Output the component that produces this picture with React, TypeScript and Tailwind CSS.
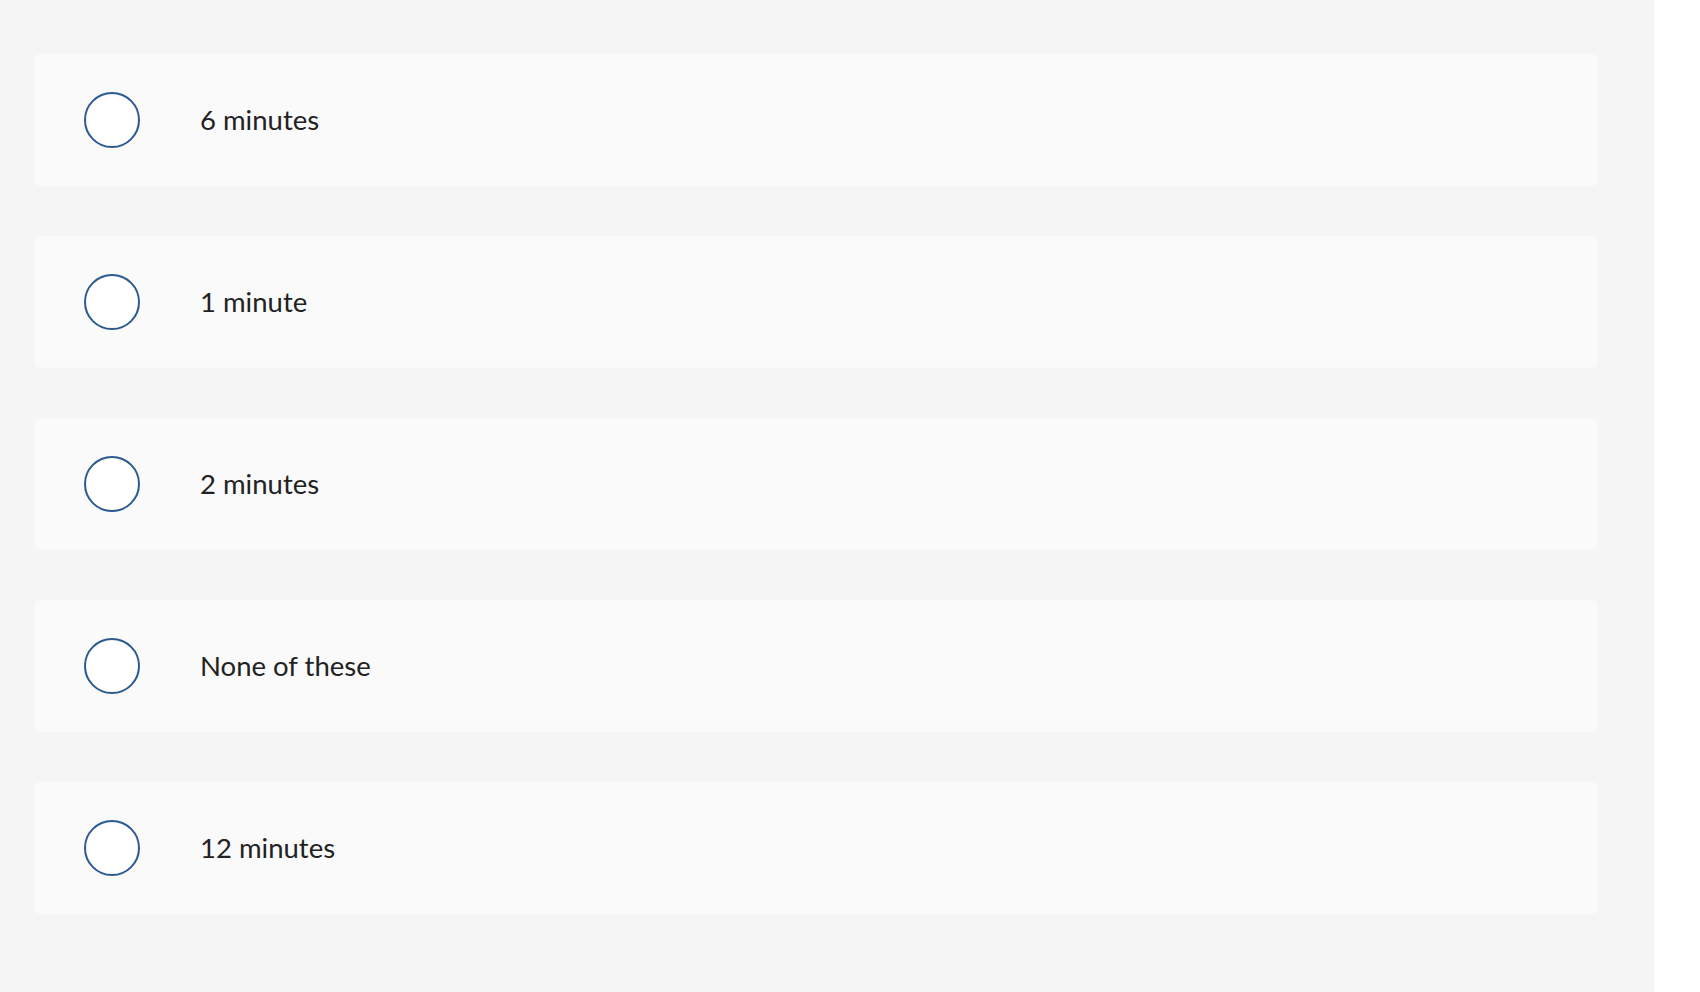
const options = ['6 minutes', '1 minute', '2 minutes', 'None of these', '12 minutes'];

export default function App() {
  return (
    <div className="min-h-[992px] w-full bg-white">
      <div className="min-h-[992px] w-[1654px] bg-[#f5f5f5] pl-[34px] pr-[56px] pt-[54px]">
        <div className="flex flex-col gap-[50px]">
          {options.map((label) => (
            <label
              key={label}
              className="flex h-[132px] cursor-pointer items-center rounded-[6px] bg-[#fafafa] pl-[50px]"
            >
              <span className="h-[56px] w-[56px] shrink-0 rounded-full border-2 border-[#2b5a8f] bg-white" />
              <span className="ml-[60px] font-['Lato',sans-serif] text-[27.5px] text-[#222222]">{label}</span>
            </label>
          ))}
        </div>
      </div>
    </div>
  );
}
